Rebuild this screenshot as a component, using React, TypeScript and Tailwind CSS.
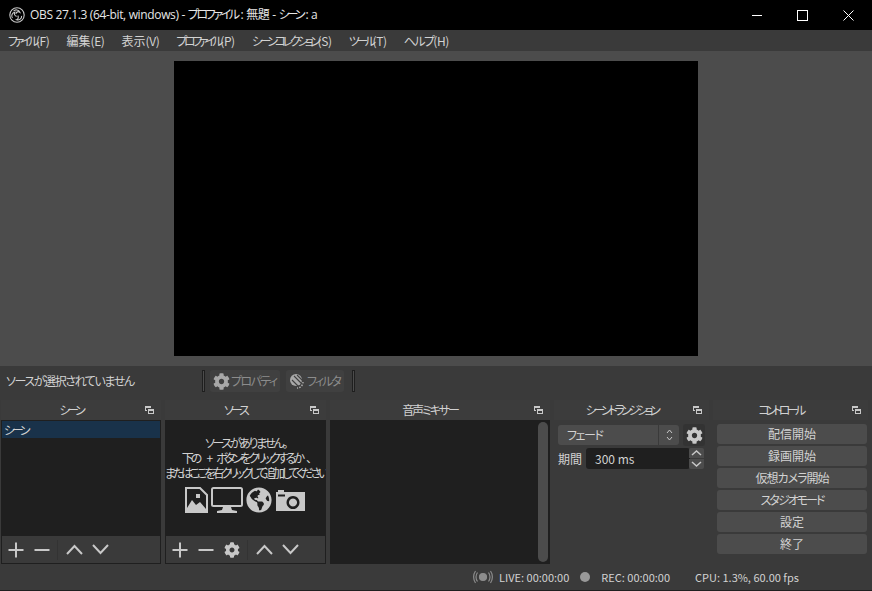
import React from 'react';
import { FaCog, FaGlobeAmericas } from 'react-icons/fa';

const menus = [
    { kana: 'ファイル', rest: '(F)', cls: 'tracking-[-3.4px]' },
    { kana: '編集', rest: '(E)', cls: '' },
    { kana: '表示', rest: '(V)', cls: '' },
    { kana: 'プロファイル', rest: '(P)', cls: 'tracking-[-3.4px]' },
    { kana: 'シーンコレクション', rest: '(S)', cls: 'tracking-[-3.4px]' },
    { kana: 'ツール', rest: '(T)', cls: 'tracking-[-3.4px]' },
    { kana: 'ヘルプ', rest: '(H)', cls: 'tracking-[-1.6px]' },
];
const controls = [
    { label: '配信開始', cls: '' },
    { label: '録画開始', cls: '' },
    { label: '仮想カメラ開始', cls: 'tracking-[-1px]' },
    { label: 'スタジオモード', cls: 'tracking-[-2px]' },
    { label: '設定', cls: '' },
    { label: '終了', cls: '' },
];

const FloatIcon = () => (
    <svg width="9" height="8" viewBox="0 0 9 8" className="absolute right-[7px] top-[6px]">
        <rect x="0" y="0" width="6" height="5" fill="#c8c8c8" />
        <rect x="1" y="2" width="4" height="2" fill="#3c3c3c" />
        <rect x="2" y="2" width="7" height="6" fill="#3c3c3c" />
        <rect x="3" y="3" width="6" height="5" fill="#c8c8c8" />
        <rect x="4" y="5" width="4" height="2" fill="#3c3c3c" />
    </svg>
);

const DockHeader = ({ title, cls }: { title: string; cls: string }) => (
    <div className="relative h-[20px] shrink-0 bg-[#3c3c3c] pr-[20px] text-center text-[12px] leading-[20px] text-[#d2d2d2]">
        <span className={cls}>{title}</span>
        <FloatIcon />
    </div>
);

const Plus = () => (
    <svg width="16" height="16" viewBox="0 0 16 16" stroke="#c8c8c8" strokeWidth="2">
        <path d="M8 0.5V15.5M0.5 8H15.5" />
    </svg>
);
const Minus = () => (
    <svg width="16" height="16" viewBox="0 0 16 16" stroke="#c8c8c8" strokeWidth="2">
        <path d="M0.5 8H15.5" />
    </svg>
);
const Up = () => (
    <svg width="17" height="11" viewBox="0 0 17 11" fill="none" stroke="#c8c8c8" strokeWidth="2">
        <path d="M1 10L8.5 2L16 10" />
    </svg>
);
const Down = () => (
    <svg width="17" height="11" viewBox="0 0 17 11" fill="none" stroke="#c8c8c8" strokeWidth="2">
        <path d="M1 1L8.5 9L16 1" />
    </svg>
);

const DockToolbar = ({ gear }: { gear?: boolean }) => (
    <div className="flex h-[27px] shrink-0 items-center bg-[#3a3a3a] pl-[6px]">
        <Plus />
        <div className="ml-[10px]">
            <Minus />
        </div>
        {gear && <FaCog size={16} color="#c8c8c8" className="ml-[10px]" />}
        <div className="ml-[7px] h-[20px] w-px bg-[#333333]" />
        <div className="ml-[8px]">
            <Up />
        </div>
        <div className="ml-[9px]">
            <Down />
        </div>
    </div>
);

const SourceIcons = () => (
    <div className="mt-[7px] flex items-center justify-center gap-[3px] pr-[1px]">
        <svg width="23" height="26" viewBox="0 0 23 26">
            <path d="M1 1H15L22 8V25H1Z" fill="none" stroke="#c8c8c8" strokeWidth="2" />
            <path d="M2 25V21L7 13L11 18L15 15L21 22V25Z" fill="#c8c8c8" />
            <rect x="11" y="7" width="4" height="4" fill="#c8c8c8" />
        </svg>
        <svg width="32" height="26" viewBox="0 0 32 26">
            <rect x="1" y="1" width="30" height="18" rx="1.5" fill="none" stroke="#c8c8c8" strokeWidth="2" />
            <path d="M12 20H20L21 23L26 24V26H6V24L11 23Z" fill="#c8c8c8" />
        </svg>
        <FaGlobeAmericas size={26} color="#c8c8c8" />
        <svg width="31" height="23" viewBox="0 0 31 23">
            <path fillRule="evenodd" d="M1 3H3V1H9V3H30V22H1ZM18 7A6.5 6.5 0 1 0 18.01 7ZM18 9.5A4 4 0 1 1 17.99 9.5ZM3 5.5V7.5H10V5.5Z" fill="#c8c8c8" />
        </svg>
    </div>
);

export default function App() {
    return (
        <div className="flex h-[591px] w-[872px] flex-col overflow-hidden bg-[#3a3a3a] font-['Noto_Sans_CJK_JP','Noto_Sans',sans-serif] text-[#d2d2d2] [font-feature-settings:'palt']">
            {/* Title bar */}
            <div className="flex h-[30px] shrink-0 items-center bg-black pl-[9px] text-[12px] text-[#e6e6e6]">
                <svg width="16" height="16" viewBox="0 0 16 16" fill="none" stroke="#c8c8c8" strokeWidth="1.1">
                    <circle cx="8" cy="8" r="7.2" />
                    <path d="M4.6 4.2C6 2.2 9.8 2.6 10.8 5.2C9.4 4.2 7.4 4.8 6.8 6.8" />
                    <path d="M12.6 8.8C13 11.4 10.2 13.6 7.6 12.8C9.2 12.2 9.8 10.2 8.8 8.6" />
                    <path d="M3.4 11C1.8 8.8 3.2 5.6 5.8 5.2C4.8 6.6 5.6 8.8 7.6 9.4" />
                </svg>
                <span className="ml-[5px] whitespace-nowrap font-['Open_Sans','Noto_Sans_CJK_JP',sans-serif] tracking-[-0.35px]">
                    OBS 27.1.3 (64-bit, windows) - <span className="tracking-[-2.4px]">プロファイル</span><span className="ml-[3px]">: 無題 - </span><span className="tracking-[-3px]">シーン</span><span className="ml-[3px]">: a</span>
                </span>
                <div className="ml-auto flex items-center">
                    <div className="h-px w-[10px] bg-white" />
                    <div className="ml-[35px] h-[11px] w-[11px] border border-white" />
                    <svg width="11" height="11" viewBox="0 0 11 11" stroke="#ffffff" strokeWidth="1" className="ml-[35px] mr-[18px]">
                        <path d="M0.5 0.5L10.5 10.5M10.5 0.5L0.5 10.5" />
                    </svg>
                </div>
            </div>

            {/* Menu */}
            <div className="flex h-[21px] shrink-0 items-center gap-[17px] pl-[8px] text-[12px]">
                {menus.map((m) => (
                    <span key={m.kana} className="whitespace-nowrap">
                        <span className={m.cls}>{m.kana}</span>
                        <span className="tracking-[-0.4px]">{m.rest}</span>
                    </span>
                ))}
            </div>

            {/* Preview */}
            <div className="flex h-[315px] shrink-0 justify-center bg-[#4c4c4c] pt-[10px]">
                <div className="h-[295px] w-[524px] bg-black" />
            </div>

            {/* Context bar */}
            <div className="flex h-[34px] shrink-0 items-center bg-[#3a3a3a] pb-[4px] pl-[6px] text-[12px]">
                <span className="w-[196px] whitespace-nowrap tracking-[-1.4px]">ソースが選択されていません</span>
                <div className="h-[22px] w-[3px] border border-[#1f1f1f] bg-[#4c4c4c]" />
                <div className="ml-[5px] flex h-[22px] w-[70px] items-center rounded-[3px] bg-[#404040] pl-[3px] text-[#8c8c8c]">
                    <FaCog size={17} color="#a8a8a8" />
                    <span className="ml-[1px] whitespace-nowrap tracking-[-1.6px]">プロパティ</span>
                </div>
                <div className="ml-[6px] flex h-[22px] w-[58px] items-center rounded-[3px] bg-[#404040] pl-[3px] text-[#8c8c8c]">
                    <svg width="17" height="17" viewBox="0 0 17 17">
                        <circle cx="7" cy="7" r="6" fill="#a8a8a8" />
                        <path d="M5 3L14 12M3 7L10 14M8 2L15 9" stroke="#404040" strokeWidth="1.1" />
                        <path d="M14 9A6 6 0 0 1 8 15" stroke="#a8a8a8" strokeWidth="1.5" strokeDasharray="1.5 1.2" fill="none" />
                    </svg>
                    <span className="ml-[1px] whitespace-nowrap tracking-[-2px]">フィルタ</span>
                </div>
                <div className="ml-[8px] h-[22px] w-[3px] border border-[#1f1f1f] bg-[#4c4c4c]" />
            </div>

            {/* Docks */}
            <div className="flex h-[164px] shrink-0 pl-px text-[12px]">
                <div className="flex w-[160px] flex-col">
                    <DockHeader title="シーン" cls="tracking-[-3.2px]" />
                    <div className="flex-1 border-x border-[#1f1f1f] bg-[#1f1f1f] pt-[1px]">
                        <div className="h-[17px] bg-[#19324a] pl-[2px] leading-[18px] tracking-[-3.2px]">シーン</div>
                    </div>
                    <div className="border border-t-0 border-[#1f1f1f]">
                        <DockToolbar />
                    </div>
                </div>
                <div className="ml-[4px] flex w-[161px] flex-col">
                    <DockHeader title="ソース" cls="tracking-[-3px]" />
                    <div className="flex-1 overflow-hidden bg-[#1f1f1f] pt-[15px] text-center text-[12px] leading-[15px] whitespace-nowrap">
                        <div className="tracking-[-2.4px]">ソースがありません。</div>
                        <div className="tracking-[-2.9px]">
                            下の<span className="ml-[7px] mr-[6px]">+</span>ボタンをクリックするか<span className="ml-[4px]">、</span>
                        </div>
                        <div className="flex justify-center tracking-[-3.1px]">
                            <span className="shrink-0">または ここを右クリックして追加してください</span>
                        </div>
                        <SourceIcons />
                    </div>
                    <div className="border border-t-0 border-[#1f1f1f]">
                        <DockToolbar gear />
                    </div>
                </div>
                <div className="ml-[4px] flex w-[220px] flex-col">
                    <DockHeader title="音声ミキサー" cls="tracking-[-2.1px]" />
                    <div className="relative flex-1 bg-[#1f1f1f]">
                        <div className="absolute right-[2px] top-[2px] bottom-[2px] w-[10px] rounded-[5px] bg-[#4c4c4c]" />
                    </div>
                </div>
                <div className="ml-[4px] flex w-[155px] flex-col">
                    <DockHeader title="シーントランジション" cls="tracking-[-3.4px]" />
                    <div className="mt-[4px] flex h-[22px] items-center pl-[4px]">
                        <div className="flex h-[20px] w-[100px] items-center rounded-l-[3px] bg-[#4c4c4c] pl-[9px] tracking-[-1.4px]">フェード</div>
                        <div className="ml-px flex h-[20px] w-[20px] items-center justify-center rounded-r-[3px] bg-[#4c4c4c]">
                            <svg width="7" height="14" viewBox="0 0 7 14" fill="none" stroke="#c8c8c8">
                                <path d="M1 5L3.5 2L6 5M1 9L3.5 12L6 9" />
                            </svg>
                        </div>
                        <div className="ml-[4px] flex h-[22px] w-[22px] items-center justify-center rounded-[3px] bg-[#333333]">
                            <FaCog size={17} color="#c8c8c8" />
                        </div>
                    </div>
                    <div className="mt-[2px] flex h-[21px] items-center pl-[4px]">
                        <span className="w-[28px]">期間</span>
                        <div className="flex h-[21px] w-[104px] items-center rounded-[3px] bg-[#1f1f1f] pl-[9px]">300 ms</div>
                        <div className="-ml-[1px] flex flex-col gap-px">
                            <div className="flex h-[10px] w-[15px] items-center justify-center rounded-t-[2px] bg-[#4c4c4c]">
                                <svg width="11" height="6" viewBox="0 0 11 6" fill="none" stroke="#c8c8c8" strokeWidth="1.5"><path d="M1 5L5.5 1L10 5" /></svg>
                            </div>
                            <div className="flex h-[10px] w-[15px] items-center justify-center rounded-b-[2px] bg-[#4c4c4c]">
                                <svg width="11" height="6" viewBox="0 0 11 6" fill="none" stroke="#c8c8c8" strokeWidth="1.5"><path d="M1 1L5.5 5L10 1" /></svg>
                            </div>
                        </div>
                    </div>
                </div>
                <div className="ml-[4px] flex w-[155px] flex-col">
                    <DockHeader title="コントロール" cls="tracking-[-3.6px]" />
                    <div className="flex flex-col gap-[2px] pl-[4px] pr-px pt-[4px]">
                        {controls.map((c) => (
                            <div key={c.label} className={`flex h-[20px] items-center justify-center rounded-[3px] bg-[#4c4c4c] ${c.cls}`}>
                                {c.label}
                            </div>
                        ))}
                    </div>
                </div>
            </div>

            {/* Status bar */}
            <div className="flex h-[27px] shrink-0 items-center border-b border-[#1f1f1f] pl-[473px] text-[11px]">
                <svg width="20" height="14" viewBox="0 0 20 14" fill="none" stroke="#8c8c8c" strokeWidth="1.2">
                    <circle cx="10" cy="7" r="3.5" fill="#8c8c8c" />
                    <path d="M4.5 2.5C2.5 5 2.5 9 4.5 11.5M2.5 1C0 4.5 0 9.5 2.5 13M15.5 2.5C17.5 5 17.5 9 15.5 11.5M17.5 1C20 4.5 20 9.5 17.5 13" />
                </svg>
                <span className="ml-[6px]">LIVE: 00:00:00</span>
                <div className="ml-[11px] h-[10px] w-[10px] rounded-full bg-[#999999]" />
                <span className="ml-[11px]">REC: 00:00:00</span>
                <span className="ml-[25px]">CPU: 1.3%, 60.00 fps</span>
            </div>
        </div>
    );
}
